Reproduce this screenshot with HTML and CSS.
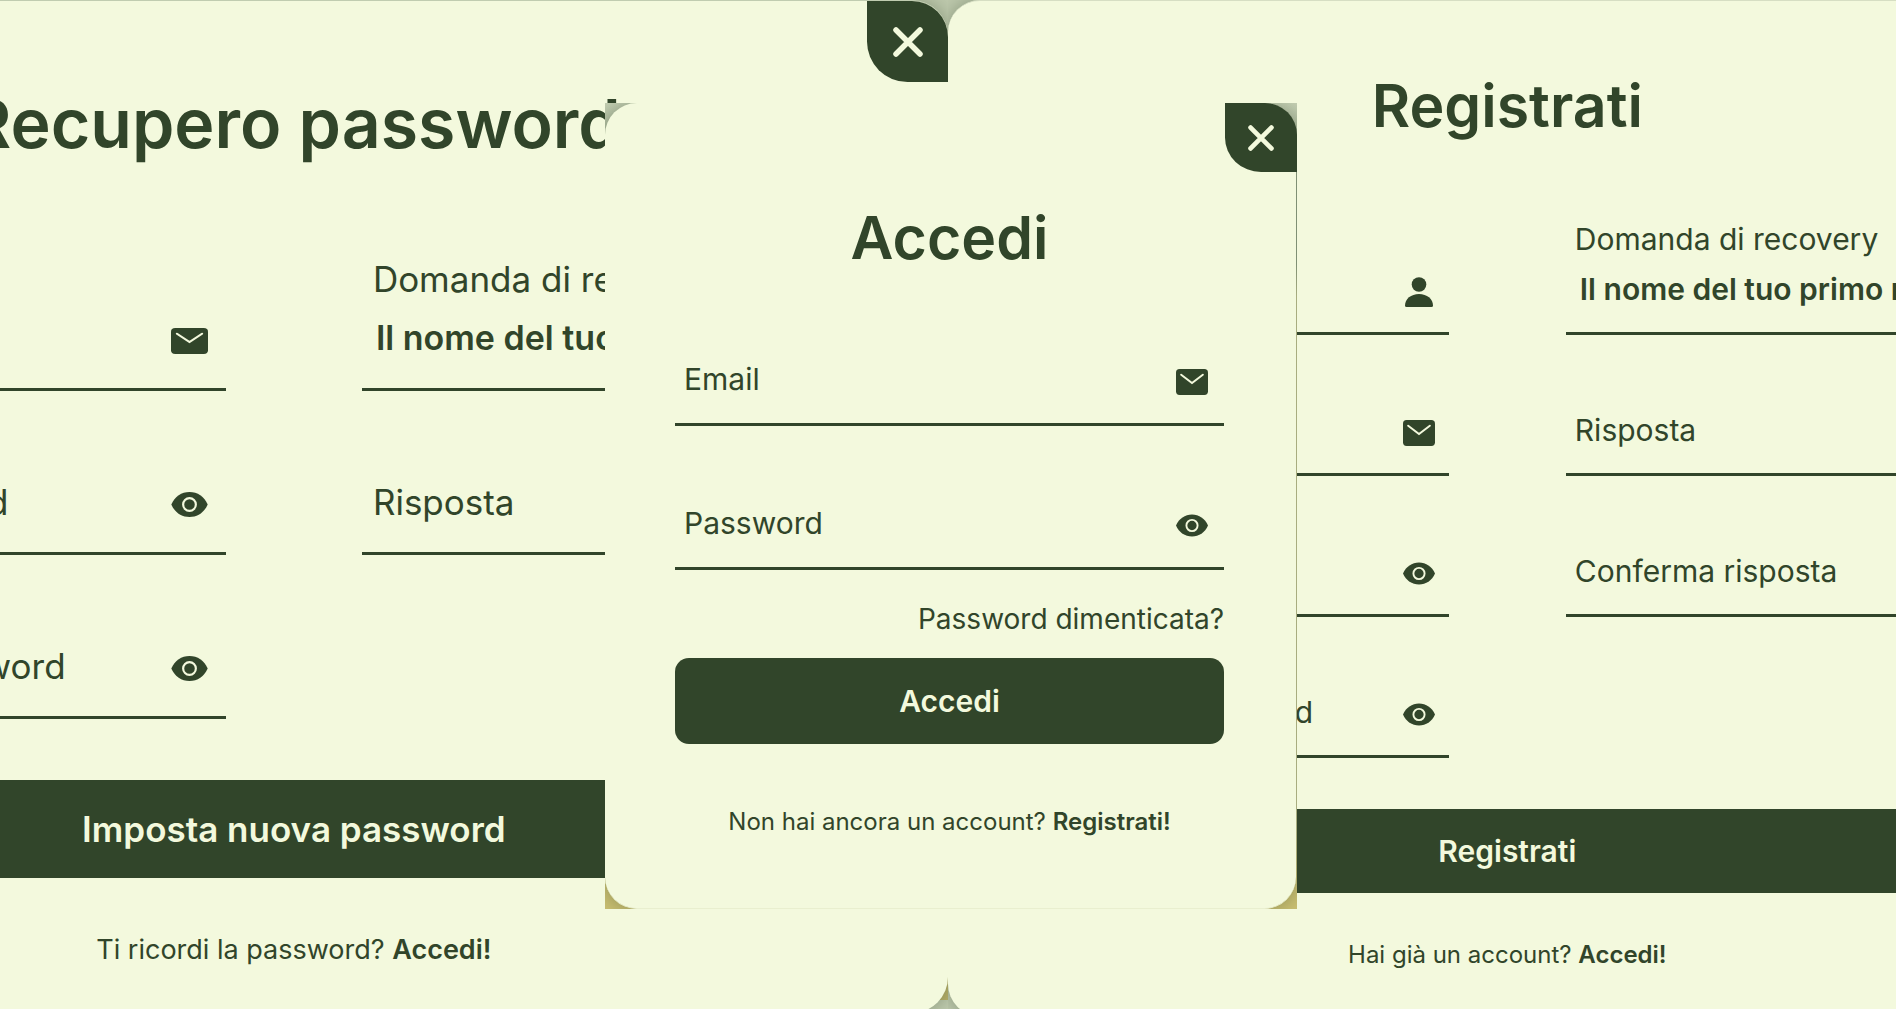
FILE: index.html
```html
<!DOCTYPE html>
<html lang="it">
<head>
<meta charset="utf-8">
<meta name="viewport" content="width=device-width, initial-scale=1">
<title>Accedi</title>
<link rel="stylesheet" href="styles.css">
</head>
<body>
<svg class="sprite" aria-hidden="true">
  <symbol id="mail" viewBox="0 0 31 25" preserveAspectRatio="none">
    <rect width="31" height="25" rx="3.500" fill="currentColor"/>
    <path d="M5 5.500 15.500 13.500 26 5.500" fill="none" stroke="#f3f9dd" stroke-width="1.900" stroke-linecap="round"/>
  </symbol>
  <symbol id="eye" viewBox="0 0 32 22">
    <path d="M0 11C3 4 9 0 16 0s13 4 16 11c-3 7-9 11-16 11S3 18 0 11z" fill="currentColor"/>
    <circle cx="16" cy="11" r="5.600" fill="none" stroke="#f3f9dd" stroke-width="1.900"/>
  </symbol>
  <symbol id="user" viewBox="0 0 28 30">
    <circle cx="14" cy="7.500" r="7.300" fill="currentColor"/>
    <path d="M0 28.500C0 22 6 17 14 17s14 5 14 11.500Q28 30 26.500 30h-25Q0 30 0 28.500z" fill="currentColor"/>
  </symbol>
  <symbol id="close" viewBox="0 0 30 30">
    <path d="M3 3 27 27M27 3 3 27" fill="none" stroke="currentColor" stroke-width="5.500" stroke-linecap="round"/>
  </symbol>
</svg>

<main class="stage">
  <section class="side side-left">
    <form class="panel panel-large">
      <button class="close" type="button" aria-label="Chiudi"><svg><use href="#close"/></svg></button>
      <h2 class="title">Recupero password</h2>
      <div class="columns">
        <div class="field">
          <input id="rec-email" type="email"><label for="rec-email">Email</label>
          <svg class="icon mail"><use href="#mail"/></svg>
        </div>
        <div class="question">
          <label for="rec-question">Domanda di recovery</label>
          <div class="field"><select id="rec-question"><option>Il nome del tuo primo maestro</option></select></div>
        </div>
        <div class="field">
          <input id="rec-password" type="password"><label for="rec-password">Nuova password</label>
          <svg class="icon"><use href="#eye"/></svg>
        </div>
        <div class="field"><input id="rec-answer" type="text"><label for="rec-answer">Risposta</label></div>
        <div class="field">
          <input id="rec-confirm" type="password"><label for="rec-confirm">Conferma password</label>
          <svg class="icon"><use href="#eye"/></svg>
        </div>
      </div>
      <button class="submit" type="submit">Imposta nuova password</button>
      <p class="switch">Ti ricordi la password? <a href="#accedi">Accedi!</a></p>
    </form>
  </section>

  <section class="side side-right">
    <form class="panel panel-medium">
      <h2 class="title">Registrati</h2>
      <div class="columns">
        <div class="field">
          <input id="reg-name" type="text"><label for="reg-name">Username</label>
          <svg class="icon user"><use href="#user"/></svg>
        </div>
        <div class="question">
          <label for="reg-question">Domanda di recovery</label>
          <div class="field"><select id="reg-question"><option>Il nome del tuo primo maestro</option></select></div>
        </div>
        <div class="field">
          <input id="reg-email" type="email"><label for="reg-email">Email</label>
          <svg class="icon mail"><use href="#mail"/></svg>
        </div>
        <div class="field"><input id="reg-answer" type="text"><label for="reg-answer">Risposta</label></div>
        <div class="field">
          <input id="reg-password" type="password"><label for="reg-password">Password</label>
          <svg class="icon"><use href="#eye"/></svg>
        </div>
        <div class="field"><input id="reg-answer2" type="text"><label for="reg-answer2">Conferma risposta</label></div>
        <div class="field">
          <input id="reg-confirm" type="password"><label for="reg-confirm">Conferma password</label>
          <svg class="icon"><use href="#eye"/></svg>
        </div>
      </div>
      <button class="submit" type="submit">Registrati</button>
      <p class="switch">Hai già un account? <a href="#accedi">Accedi!</a></p>
    </form>
  </section>

  <section class="overlay" id="accedi">
    <form class="panel panel-small">
      <button class="close" type="button" aria-label="Chiudi"><svg><use href="#close"/></svg></button>
      <h2 class="title">Accedi</h2>
      <div class="fields">
        <div class="field">
          <input id="log-email" type="email"><label for="log-email">Email</label>
          <svg class="icon mail"><use href="#mail"/></svg>
        </div>
        <div class="field">
          <input id="log-password" type="password"><label for="log-password">Password</label>
          <svg class="icon"><use href="#eye"/></svg>
        </div>
      </div>
      <a class="forgot" href="#recupero">Password dimenticata?</a>
      <button class="submit" type="submit">Accedi</button>
      <p class="switch">Non hai ancora un account? <a href="#registrati">Registrati!</a></p>
    </form>
  </section>
</main>
</body>
</html>
```
FILE: styles.css
```css
:root {
  --dark: #31452a;
  --light: #f3f9dd;
  --sage: #bfcaae;
}

* { box-sizing: border-box; }

body {
  margin: 0;
  overflow: hidden;
  background: var(--sage);
  color: var(--dark);
  font-family: Inter, "Open Sans", sans-serif;
}

.sprite { position: absolute; width: 0; height: 0; }

.stage {
  position: relative;
  display: grid;
  grid-template-columns: 1fr 1fr;
  height: 100vh;
  overflow: hidden;
}

.side { display: flex; align-items: flex-start; min-width: 0; overflow: hidden; }
.side-left {
  justify-content: flex-end;
  background: linear-gradient(#b9b16b, #b9b16b) right bottom 9px / 8px 24px no-repeat var(--sage);
}

/* Panels */
.panel {
  position: relative;
  display: flex;
  flex-direction: column;
  flex: none;
  background: var(--light);
  box-shadow: 0 0 20px rgba(49, 69, 42, 0.4);
}

.panel-large {
  --field: 84px;
  --inset: 11px;
  --label: 35px;
  --line: 36px;
  --icon: 37px;
  --close: 81px;
  width: 138%;
  padding: 82px 80px 45px;
  border-top: 1px solid #c0ccb0;
  border-radius: 36px;
}

.panel-medium {
  --field: 74px;
  --inset: 9px;
  --label: 30px;
  --line: 32px;
  --icon: 32px;
  width: 118%;
  padding: 69px 69px 45px;
  border-top: 1px solid #d6dec3;
  border-radius: 32px;
}

.panel-small {
  --field: 76px;
  --inset: 9px;
  --label: 30px;
  --line: 32px;
  --icon: 32px;
  --close: 72px;
  margin-right: 1px;
  padding: 99px 72px 70px 70px;
  border-bottom: 1px solid #e9efcf;
  border-radius: 32px;
}

.overlay {
  position: absolute;
  top: 103px;
  left: calc(50% - 343px);
  width: 36.5%;
  overflow: hidden;
  background: linear-gradient(#c5d0b4 0, #93a386 8%, #93a386 20%, #c5c694 24%, #c5c694 90%, #cbc072 98%);
}

/* Close button */
.close {
  position: absolute;
  top: 0;
  right: 0;
  display: flex;
  align-items: center;
  justify-content: center;
  width: var(--close);
  height: var(--close);
  padding: 0;
  border: 0;
  border-radius: 0 36px 0 50%;
  background: var(--dark);
  color: var(--light);
}
.panel-small .close { right: -1px; height: 69px; border-top-right-radius: 32px; }
.close svg { width: 30px; height: 30px; }
.panel-small .close svg { width: 26px; height: 26px; }

/* Headings */
.title {
  margin: 0;
  font-size: 59px;
  line-height: 72px;
  font-weight: 600;
  text-align: center;
}
.panel-large .title { font-size: 68px; line-height: 80px; }

/* Fields */
.columns { display: grid; grid-template-columns: 1fr 1fr; align-items: end; }
.panel-large .columns { margin-top: 98px; gap: 80px 136px; }
.panel-medium .columns { margin-top: 81px; gap: 67px 117px; }
.fields { display: grid; gap: 68px; margin-top: 76px; }

.field {
  display: grid;
  grid-template-columns: 1fr auto;
  align-items: center;
  height: var(--field);
  padding: 0 16px 16px 0;
  border-bottom: 3px solid var(--dark);
}
.panel-large .field { padding: 0 18px 20px 0; }
.panel-medium .field { padding-right: 14px; }
.field > input,
.field > label,
.field > select { grid-row: 1; grid-column: 1; }

label {
  padding-left: var(--inset);
  font-size: var(--label);
  line-height: var(--line);
}

input,
select {
  width: 100%;
  height: 48px;
  padding: 0 0 0 var(--inset);
  border: 0;
  background: transparent;
  color: inherit;
  font: inherit;
  font-size: var(--label);
  appearance: none;
}
select { padding-left: 14px; font-weight: 600; }
.panel-large select { font-size: 34px; }

.question { display: flex; flex-direction: column; gap: 6px; }
.panel-large .question { gap: 10px; }

.icon { width: var(--icon); height: 25px; margin-top: 6px; }
.icon.mail { height: 26px; }
.icon.user { width: 28px; height: 30px; margin-right: 2px; }

/* Actions */
.forgot {
  align-self: flex-end;
  margin-top: 33px;
  color: inherit;
  font-size: 28px;
  line-height: 32px;
  text-decoration: none;
}

.submit {
  height: 86px;
  margin-top: 23px;
  padding: 0;
  border: 0;
  border-radius: 14px;
  background: var(--dark);
  color: var(--light);
  font: inherit;
  font-size: 30px;
  font-weight: 600;
}
.panel-medium .submit { height: 84px; margin-top: 51px; }
.panel-large .submit { height: 98px; margin-top: 61px; font-size: 35px; }

.switch {
  margin: 62px 0 0;
  font-size: 24px;
  line-height: 32px;
  text-align: center;
}
.switch a { color: inherit; font-weight: 600; text-decoration: none; }
.panel-medium .switch { margin-top: 46px; }
.panel-large .switch { margin-top: 54px; font-size: 27px; line-height: 36px; }
```
